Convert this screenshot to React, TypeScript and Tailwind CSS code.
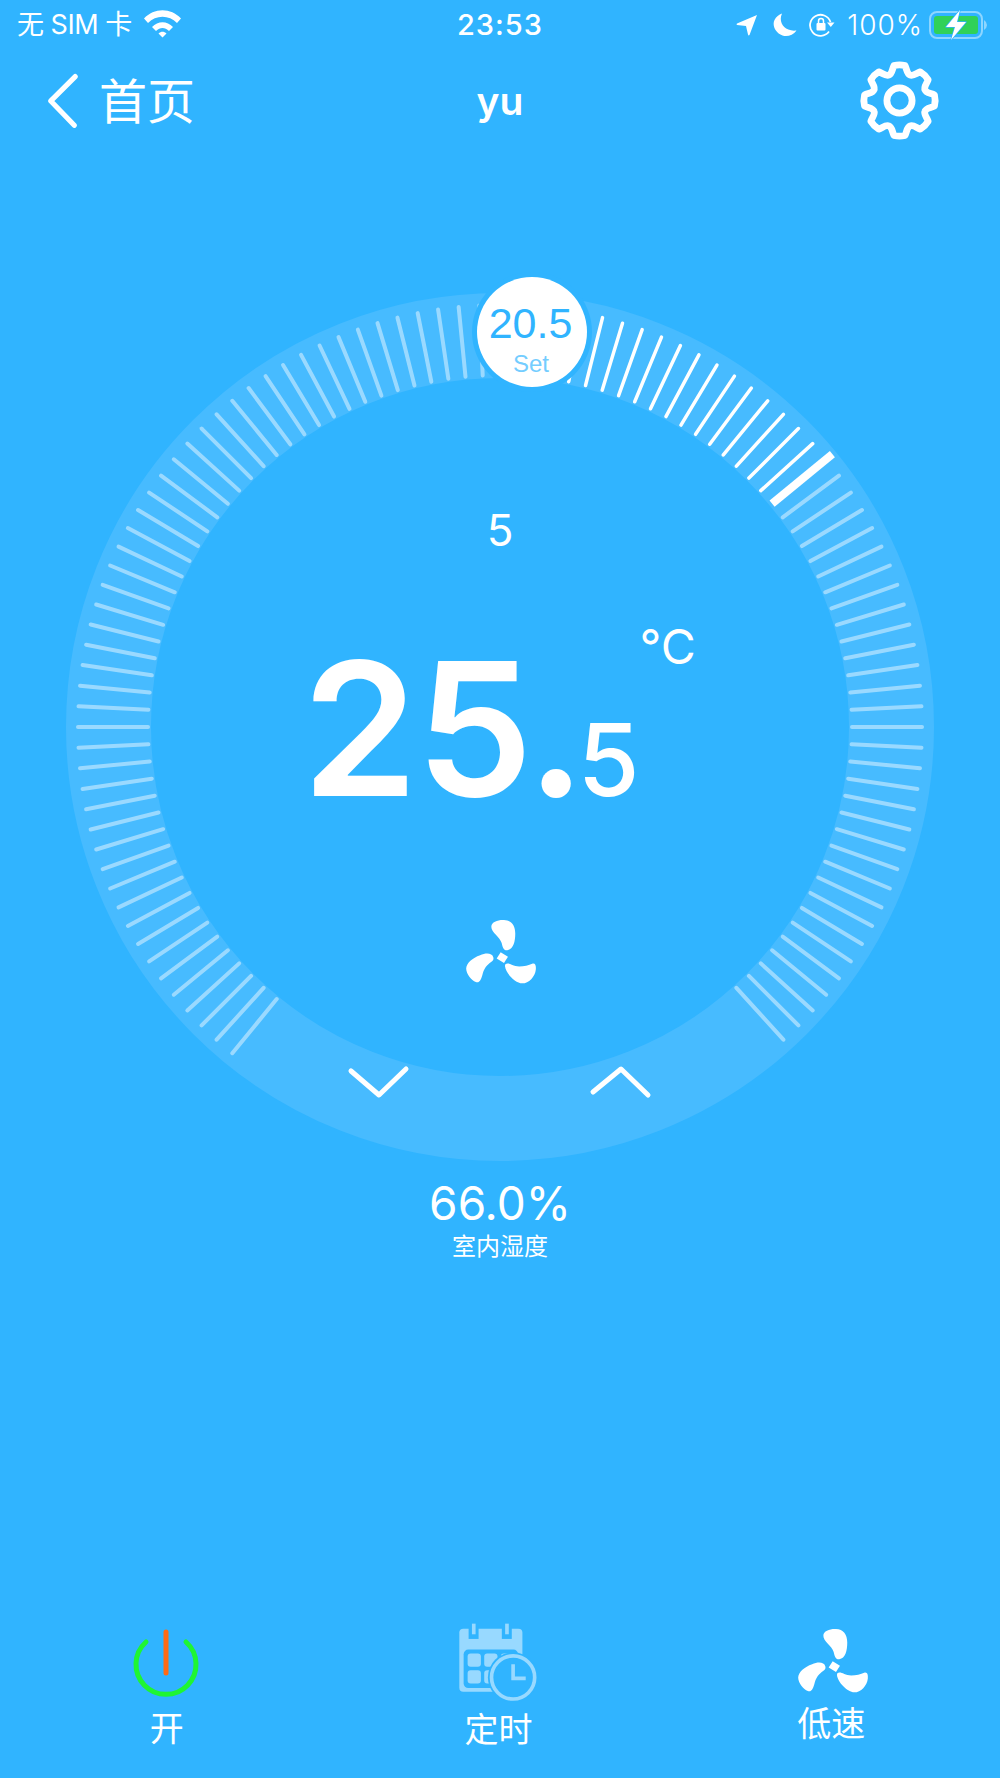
import React from "react";

function Fan({ className }: { className: string }) {
  return (
    <svg viewBox="133 116 216 196" className={className} fill="#fff">
      <path d="M212 138 C212 125 232 118 250 119 C272 120 284 135 284 160 C284 185 278 208 260 210 C248 211 246 200 243 188 C238 170 210 155 212 138 Z" />
      <path d="M218 232 C214 218 196 218 178 225 C155 233 137 248 136 265 C136 282 152 300 165 306 C178 310 182 295 186 280 C192 260 205 250 215 243 C218 240 219 236 218 232 Z" />
      <path d="M253 258 C253 248 264 249 275 255 C290 263 320 258 335 251 C345 248 347 258 346 268 C344 290 325 310 305 310 C285 310 255 280 253 258 Z" />
      <path d="M240 216 L262 230 L250 249 L228 235 Z" />
    </svg>
  );
}

function gearPath() {
  const cx = 50, cy = 50, R = 36.5, r = 28.5;
  const p = (deg: number, rad: number) => {
    const a = ((deg - 90) * Math.PI) / 180;
    return `${(cx + rad * Math.cos(a)).toFixed(2)} ${(cy + rad * Math.sin(a)).toFixed(2)}`;
  };
  let d = "";
  for (let i = 0; i < 8; i++) {
    const c = i * 45;
    d += `${i === 0 ? "M" : "L"}${p(c - 9, R)} `;
    d += `Q${p(c, R + 1)} ${p(c + 9, R)} `;
    d += `C${p(c + 13, r + 5)} ${p(c + 15, r)} ${p(c + 22.5, r)} `;
    d += `C${p(c + 30, r)} ${p(c + 32, r + 5)} ${p(c + 36, R)} `;
  }
  return d + "Z";
}

function Dial() {
  const cx = 434, cy = 434;
  const ticks = [];
  for (let k = -18; k <= 81; k++) {
    const deg = -90 + k * 2.8125;
    const a = ((deg - 90) * Math.PI) / 180;
    const thick = k === 50;
    const bright = k >= 34 && k <= 50;
    const r1 = 352, r2 = thick ? 430 : 422;
    ticks.push(
      <line
        key={k}
        x1={cx + r1 * Math.cos(a)}
        y1={cy + r1 * Math.sin(a)}
        x2={cx + r2 * Math.cos(a)}
        y2={cy + r2 * Math.sin(a)}
        stroke="#fff"
        strokeOpacity={bright ? 1 : 0.45}
        strokeWidth={thick ? 8 : bright ? 3.5 : 4}
        strokeLinecap={thick ? "butt" : "round"}
      />
    );
  }
  return (
    <svg viewBox="0 0 868 868" className="absolute inset-0 w-[868px] h-[868px]">
      <circle cx={cx} cy={cy} r={391.5} fill="none" stroke="#47BBFF" strokeWidth={85} />
      {ticks}
      <g fill="none" stroke="#fff" strokeWidth={5} strokeLinecap="round" strokeLinejoin="round">
        <path d="M285 778 L313 802 L340 776" />
        <path d="M527 799 L555 776 L582 802" />
      </g>
    </svg>
  );
}

export default function App() {
  return (
    <div
      className="w-[1000px] h-[1778px] flex flex-col overflow-hidden text-white bg-[#30B4FF]"
      style={{ fontFamily: 'Inter, "Noto Sans CJK SC", sans-serif' }}
    >
      {/* status bar */}
      <div className="h-[50px] grid grid-cols-3 items-center pl-[17px] pr-[13px]">
        <div className="flex items-center gap-[12px]">
          <span className="text-[27px] leading-[50px] tracking-[-0.5px]">无 SIM 卡</span>
          <svg viewBox="0 0 37 28" className="w-[37px] h-[28px] mb-[3px]">
            <path d="M0 8.5 C10 -2.5 27 -2.5 37 8.5 L33 13 C25 4.5 12 4.5 4 13 Z" fill="#fff" />
            <path d="M8 17 C14 10.5 23 10.5 29 17 L25 21 C21 17 16 17 12 21 Z" fill="#fff" />
            <path d="M14.5 23.5 C17 21 20 21 22.5 23.5 L18.5 27.5 Z" fill="#fff" />
          </svg>
        </div>
        <div className="text-center text-[29px] font-medium leading-[50px] tracking-[1px] mr-[4px]">23:53</div>
        <div className="flex items-center justify-end">
          <svg viewBox="0 0 22 22" className="w-[22px] h-[22px] mr-[15px]">
            <path d="M21 1 L13.5 21 Q12.5 22 12 20.5 L10 12 L1 11 Q0 10 1 9.5 Z" fill="#fff" />
          </svg>
          <svg viewBox="0 0 24 24" className="w-[24px] h-[24px] mr-[12px]">
            <path d="M9 0.5 C5 9 11 19 23.5 17.5 C20 22.5 14 24 9.5 22.5 C2 20 -1 12 1.5 7 C3 4 6 1.5 9 0.5 Z" fill="#fff" />
          </svg>
          <svg viewBox="0 0 26 24" className="w-[26px] h-[24px] mr-[12px]">
            <path d="M20 18.5 A10.5 10.5 0 1 1 21.5 9" fill="none" stroke="#fff" strokeWidth="1.8" />
            <path d="M18 9.5 L25.5 9.5 L21.8 14 Z" fill="#fff" />
            <rect x="7.5" y="10" width="9" height="7.5" rx="1" fill="#fff" />
            <path d="M9.5 10 V8 A2.5 2.5 0 0 1 14.5 8 V10" fill="none" stroke="#fff" strokeWidth="1.5" />
          </svg>
          <span className="text-[28px] font-light leading-[50px] mr-[6px] tracking-[1px]">100%</span>
          <svg viewBox="0 0 58 30" className="w-[58px] h-[30px]">
            <rect x="1" y="2" width="52" height="26" rx="7" fill="none" stroke="#fff" strokeOpacity="0.45" strokeWidth="2" />
            <rect x="5" y="6" width="44" height="18" rx="3" fill="#30D158" />
            <path d="M55 10 Q58 12 58 15 Q58 18 55 20 Z" fill="#fff" fillOpacity="0.45" />
            <path d="M31 0 L17 17 H26 L22 30 L37 12 H28 Z" fill="#fff" stroke="#30B4FF" strokeWidth="1.5" strokeLinejoin="round" paintOrder="stroke" />
          </svg>
        </div>
      </div>

      {/* nav bar */}
      <div className="h-[100px] grid grid-cols-3 items-center pl-[48px] pr-[59px]">
        <div className="flex items-center gap-[21px]">
          <svg viewBox="0 0 32 60" className="w-[30px] h-[60px]">
            <path d="M29 5 L3 31 L28 57" fill="none" stroke="#fff" strokeWidth="5.5" strokeLinecap="round" strokeLinejoin="round" />
          </svg>
          <span className="text-[48px] leading-[60px] mt-[3px]">首页</span>
        </div>
        <div className="text-center text-[39px] font-semibold leading-[60px] ml-[11px] mt-[1px]">yu</div>
        <div className="flex justify-end">
          <svg viewBox="0 0 100 100" className="w-[97px] h-[97px] mr-[-7px]">
            <path d={gearPath()} fill="none" stroke="#fff" strokeWidth="7" strokeLinejoin="round" />
            <circle cx="50" cy="50" r="13" fill="none" stroke="#fff" strokeWidth="7" />
          </svg>
        </div>
      </div>

      {/* dial */}
      <div className="relative w-[868px] h-[868px] ml-[66px] mt-[143px] shrink-0 flex flex-col items-center">
        <Dial />
        <div className="absolute left-[406px] top-[-21px] w-[120px] h-[120px] rounded-full bg-[#30B4FF] flex items-center justify-center">
          <div className="w-[110px] h-[110px] rounded-full bg-white flex flex-col items-center">
            <span className="text-[43px] leading-[48px] mt-[22px] mr-[3px] text-[#30B4FF]" style={{ fontFamily: '"Liberation Sans", sans-serif' }}>20.5</span>
            <span className="text-[24px] leading-[28px] mt-[3px] mr-[2px] text-[#74CDFF]" style={{ fontFamily: '"Liberation Sans", sans-serif' }}>Set</span>
          </div>
        </div>
        <div className="relative mt-[207px] text-[44px] leading-[60px]">5</div>
        <div className="relative mt-[76px] flex items-end ml-[-2px]">
          <span className="text-[186px] font-semibold leading-[186px] tracking-[-2px]">25.</span>
          <span className="text-[100px] font-medium leading-[100px] mb-[12px] ml-[-6px]">5</span>
          <span className="self-start text-[48px] leading-[48px] mt-[-13px]">°C</span>
        </div>
        <Fan className="relative w-[72px] h-[65px] mt-[97px] ml-[2px]" />
      </div>

      {/* humidity */}
      <div className="mt-[14px] flex flex-col items-center">
        <div className="text-[46px] leading-[56px]">66.0%</div>
        <div className="text-[24px] leading-[32px]">室内湿度</div>
      </div>

      {/* bottom bar */}
      <div className="mt-auto grid grid-cols-3 h-[158px]">
        <div className="flex flex-col items-center">
          <svg viewBox="0 0 70 70" className="w-[70px] h-[70px] mt-[9px] mr-[2px]">
            <path d="M15 13 A30 30 0 1 0 55 13" fill="none" stroke="#1FF533" strokeWidth="5" strokeLinecap="round" />
            <path d="M35 3 V44" fill="none" stroke="#FF6A13" strokeWidth="5" strokeLinecap="round" />
          </svg>
          <span className="text-[34px] leading-[44px] mt-[8px]">开</span>
        </div>
        <div className="flex flex-col items-center">
          <svg viewBox="1070 62 250 250" className="w-[83px] h-[83px] mr-[4px] mt-[1px]">
            <path d="M1092 85 H1258 Q1270 85 1270 97 V262 Q1270 275 1258 275 H1092 Q1080 275 1080 262 V97 Q1080 85 1092 85 Z" fill="#98D9FF" />
            <rect x="1093" y="148" width="164" height="116" rx="14" fill="#30B4FF" />
            <rect x="1108" y="78" width="30" height="38" fill="#30B4FF" />
            <rect x="1208" y="78" width="30" height="38" fill="#30B4FF" />
            <rect x="1118" y="70" width="11" height="32" fill="#98D9FF" />
            <rect x="1218" y="70" width="11" height="32" fill="#98D9FF" />
            <rect x="1105" y="160" width="40" height="40" rx="9" fill="#98D9FF" />
            <rect x="1155" y="160" width="40" height="40" rx="9" fill="#98D9FF" />
            <rect x="1205" y="160" width="40" height="40" rx="9" fill="#98D9FF" />
            <rect x="1105" y="210" width="40" height="40" rx="9" fill="#98D9FF" />
            <rect x="1155" y="210" width="40" height="40" rx="9" fill="#98D9FF" />
            <circle cx="1242" cy="232" r="76" fill="#30B4FF" />
            <circle cx="1242" cy="232" r="65" fill="none" stroke="#98D9FF" strokeWidth="11" />
            <path d="M1242 192 V235 H1280" fill="none" stroke="#98D9FF" strokeWidth="11" />
          </svg>
          <span className="text-[34px] leading-[44px] mt-[4px] mr-[3px]">定时</span>
        </div>
        <div className="flex flex-col items-center">
          <Fan className="w-[72px] h-[65px] mt-[8px]" />
          <span className="text-[34px] leading-[44px] mt-[9px] mr-[4px]">低速</span>
        </div>
      </div>
    </div>
  );
}
